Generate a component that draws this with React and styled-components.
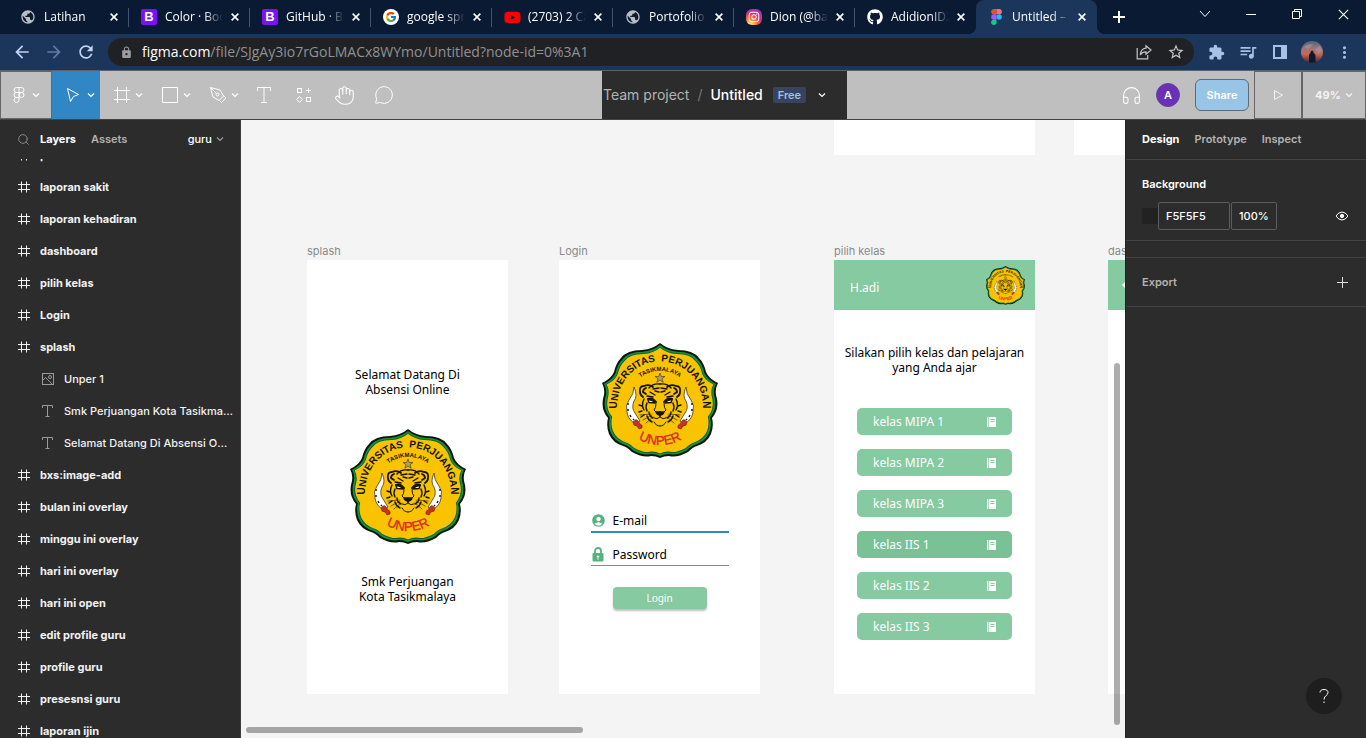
import React from 'react';
import styled, { createGlobalStyle, css } from 'styled-components';
import {
  MdPublic, MdArrowBack, MdArrowForward, MdRefresh, MdLock, MdStarBorder,
  MdExtension, MdQueueMusic, MdMoreVert, MdAccountCircle,
} from 'react-icons/md';
import { FcGoogle } from 'react-icons/fc';
import { FaYoutube, FaGithub, FaInstagram } from 'react-icons/fa';
import { Hand, MessageCircle, Headphones, Search } from 'lucide-react';

const color = {
  strip: '#0a1a33',
  bar: '#1c355b',
  pill: '#202124',
  grey: '#bfbfbf',
  line: '#666666',
  panel: '#2c2c2c',
  rule: '#444444',
  canvas: '#f4f4f4',
  green: '#85caa0',
};

const GlobalStyle = createGlobalStyle`
  * { box-sizing: border-box; }
  body { margin: 0; background: ${color.panel}; }
  button, input { font: inherit; color: inherit; margin: 0; padding: 0; border: 0; background: none; }
  svg { display: block; flex: none; }
`;

const Page = styled.div`
  height: 100vh;
  display: flex;
  flex-direction: column;
  overflow: hidden;
  font: 500 11px/16px Inter, sans-serif;
  color: #fff;
`;

/* Browser frame */

const TabStrip = styled.div`
  flex: none;
  height: 34px;
  display: flex;
  padding-left: 8px;
  background: ${color.strip};
  font: 12px/16px "Open Sans", sans-serif;
`;

const Tab = styled.div`
  position: relative;
  flex: 0 0 121px;
  height: 34px;
  display: flex;
  align-items: center;
  gap: 8px;
  padding-left: 12px;
  &::after {
    content: '';
    position: absolute;
    right: 0;
    top: 8px;
    width: 1px;
    height: 19px;
    background: ${(p) => (p.$plain ? 'transparent' : '#46556f')};
  }
  ${(p) => p.$active && css`
    background: ${color.bar};
    border-radius: 8px 8px 0 0;
    &::before, &::after {
      content: '';
      position: absolute;
      top: auto;
      bottom: 0;
      width: 8px;
      height: 8px;
    }
    &::before {
      left: -8px;
      background: radial-gradient(circle at 0 0, transparent 8px, ${color.bar} 8px);
    }
    &::after {
      right: -8px;
      background: radial-gradient(circle at 100% 0, transparent 8px, ${color.bar} 8px);
    }
  `}
`;

const TabIcon = styled.span`
  flex: none;
  width: 16px;
  height: 16px;
  display: flex;
  align-items: center;
  justify-content: center;
  color: ${(p) => p.$color || '#fff'};
`;

const TabTitle = styled.span`
  flex: 0 0 58px;
  overflow: hidden;
  white-space: nowrap;
  mask-image: linear-gradient(to right, #000 68%, transparent 100%);
`;

const IconButton = styled.button`
  flex: none;
  width: ${(p) => p.$w || 32}px;
  height: ${(p) => p.$h || 28}px;
  display: flex;
  align-items: center;
  justify-content: center;
  color: ${(p) => p.$color || '#fff'};
`;

const NewTab = styled(IconButton)`
  margin: 3px auto 0 6px;
`;

const BootstrapMark = styled.span`
  width: 16px;
  height: 16px;
  border-radius: 2px;
  background: #7a12f5;
  color: #fff;
  font: 700 13px/16px "Liberation Sans", sans-serif;
  text-align: center;
`;

const InstagramMark = styled.span`
  width: 16px;
  height: 16px;
  border-radius: 6px;
  display: flex;
  align-items: center;
  justify-content: center;
  background: radial-gradient(circle at 25% 100%, #ffd45a 10%, #fb6d34 35%, #d82d7e 60%, #8b34d6 100%);
`;

const AddressRow = styled.div`
  flex: none;
  height: 36px;
  display: flex;
  align-items: center;
  padding: 0 6px;
  background: ${color.bar};
`;

const Address = styled.div`
  flex: 1;
  min-width: 0;
  height: 28px;
  margin: 0 6px;
  padding: 0 2px 0 12px;
  display: flex;
  align-items: center;
  gap: 9px;
  border-radius: 14px;
  background: ${color.pill};
  color: #9a9da1;
`;

const Url = styled.span`
  flex: 1;
  overflow: hidden;
  white-space: nowrap;
  font: 14px/20px "Open Sans", sans-serif;
  color: #8f9295;
  b { font-weight: 400; color: #fff; }
`;

const AddressActions = styled.div`
  display: flex;
  color: #c4c7ca;
`;

/* Editor toolbar */

const Toolbar = styled.header`
  flex: none;
  height: 50px;
  display: flex;
  background: ${color.grey};
  border-top: 1px solid #59636f;
  border-bottom: 1px solid #444;
`;

const ToolGroup = styled.div`
  flex: 1;
  display: flex;
`;

const MenuTool = styled.button`
  width: ${(p) => (p.$outlined ? 52 : 48)}px;
  display: flex;
  align-items: center;
  justify-content: space-between;
  padding: 0 ${(p) => (p.$outlined ? 11 : 5)}px 0 ${(p) => (p.$outlined ? 12 : 13)}px;
  background: ${(p) => (p.$active ? '#3187c5' : 'transparent')};
  ${(p) => p.$outlined && css`border: 1px solid ${color.line};`}
`;

const Tool = styled.button`
  width: 40px;
  display: flex;
  align-items: center;
  justify-content: center;
`;

const FileTitle = styled.div`
  flex: 0 0 245px;
  display: flex;
  align-items: center;
  padding-left: 1px;
  background: ${color.panel};
  font-size: 14px;
  font-weight: 400;
  color: #b3b3b3;
  white-space: nowrap;
`;

const Slash = styled.span`
  margin: 0 8px;
  color: #777;
`;

const FileName = styled.span`
  font-weight: 500;
  color: #fff;
`;

const FreeBadge = styled.span`
  height: 16px;
  margin: 0 12px 0 10px;
  padding: 0 5px;
  border-radius: 2px;
  background: #394360;
  color: #96c4e8;
  font-size: 11px;
  font-weight: 600;
`;

const ShareGroup = styled.div`
  flex: 0 0 519px;
  display: flex;
  align-items: center;
  justify-content: flex-end;
`;

const Avatar = styled.span`
  width: 24px;
  height: 24px;
  margin: 0 15px 0 14px;
  border-radius: 50%;
  border: 1px solid #62479c;
  background: #6b2fb8;
  font-weight: 600;
  line-height: 22px;
  text-align: center;
`;

const Share = styled.button`
  width: 54px;
  height: 32px;
  margin-right: 5px;
  border: 1px solid #5f6b78;
  border-radius: 6px;
  background: #98c4e6;
  font-weight: 600;
`;

const EndButton = styled.button`
  width: ${(p) => p.$w}px;
  height: 48px;
  display: flex;
  align-items: center;
  justify-content: center;
  gap: 4px;
  border: 1px solid ${color.line};
  font-weight: 700;
  color: #f4f4f4;
`;

/* Panels */

const Workspace = styled.div`
  flex: 1;
  min-height: 0;
  display: flex;
`;

const LeftPanel = styled.aside`
  flex: 0 0 241px;
  min-width: 0;
  display: flex;
  flex-direction: column;
  border-right: 1px solid #3c3c3c;
  background: ${color.panel};
`;

const LeftHeader = styled.div`
  flex: none;
  height: 39px;
  display: flex;
  align-items: center;
  padding: 0 16px 1px 17px;
`;

const SearchIcon = styled(Search)`
  margin-right: 10px;
  color: #9a9a9a;
`;

const PanelTab = styled.button`
  margin-right: 15px;
  font-weight: ${(p) => (p.$on ? 700 : 600)};
  color: ${(p) => (p.$on ? '#fff' : '#b3b3b3')};
`;

const PagePicker = styled.button`
  margin-left: auto;
  display: flex;
  align-items: center;
  gap: 4px;
`;

const Layers = styled.ul`
  flex: 1;
  min-height: 0;
  overflow: hidden;
  margin: 0;
  padding: 0;
  list-style: none;
  & > li:first-child { margin-top: -20px; }
`;

const Layer = styled.li`
  height: 32px;
  display: flex;
  align-items: center;
  gap: 8px;
  padding: 0 7px 0 ${(p) => (p.$child ? 40 : 16)}px;
  font-weight: ${(p) => (p.$child ? 500 : 700)};
  color: #f2f2f2;
  span { overflow: hidden; text-overflow: ellipsis; white-space: nowrap; }
`;

const RightPanel = styled.aside`
  position: relative;
  flex: 0 0 241px;
  border-left: 1px solid #222;
  background: ${color.panel};
`;

const Section = styled.section`
  height: ${(p) => p.$h}px;
  padding: 0 16px;
  border-bottom: 1px solid ${color.rule};
`;

const SectionRow = styled.div`
  height: ${(p) => p.$h}px;
  display: flex;
  align-items: center;
  font-weight: 600;
  color: ${(p) => (p.$dim ? '#b3b3b3' : '#fff')};
`;

const RowAction = styled(IconButton)`
  margin-left: auto;
`;

const Swatch = styled.span`
  width: 16px;
  height: 16px;
  background: #222;
`;

const Field = styled.input`
  && {
    width: ${(p) => p.$w}px;
    height: 28px;
    margin-right: 1px;
    padding-left: 7px;
    border: 1px solid #5c5c5c;
    border-radius: 2px;
    font-weight: 500;
    color: #fff;
  }
`;

const Help = styled.button`
  position: absolute;
  right: 24px;
  bottom: 24px;
  width: 36px;
  height: 36px;
  border-radius: 50%;
  background: #1e1e1e;
  display: flex;
  align-items: center;
  justify-content: center;
`;

/* Canvas */

const Canvas = styled.main`
  position: relative;
  flex: 1;
  min-width: 0;
  overflow: hidden;
  background: ${color.canvas};
  color: #000;
`;

const Artboard = styled.section`
  position: absolute;
  left: ${(p) => p.$x}px;
  top: ${(p) => p.$y}px;
  width: 201px;
  height: 434px;
  display: flex;
  flex-direction: column;
  align-items: center;
  background: #fff;
  font: 12px/15px "Noto Sans", sans-serif;
`;

const ArtboardName = styled.span`
  position: absolute;
  left: 0;
  top: -17px;
  font: 400 11px/16px Inter, sans-serif;
  color: #8a8a8a;
`;

const Message = styled.p`
  margin: ${(p) => p.$top}px 0 0;
  text-align: center;
  white-space: pre;
`;

const LogoSlot = styled.div`
  margin-top: ${(p) => p.$top}px;
`;

const LoginForm = styled.form`
  margin-top: 51px;
  display: flex;
  flex-direction: column;
  align-items: center;
`;

const LoginField = styled.label`
  width: 138px;
  height: 23px;
  margin-bottom: 10px;
  display: flex;
  align-items: center;
  gap: 7px;
  border-bottom: ${(p) => (p.$focus ? '2px solid #3187c5' : '1px solid #8a8a8a')};
  input { width: 100px; outline: 0; }
  input::placeholder { color: #000; opacity: 1; }
`;

const LoginButton = styled.button`
  && {
    width: 94px;
    height: 22px;
    margin-top: 11px;
    border-radius: 4px;
    background: ${color.green};
    box-shadow: 0 2px 2px rgba(0, 0, 0, 0.25);
    color: #fff;
    font-size: 10px;
  }
`;

const PhoneHeader = styled.div`
  align-self: stretch;
  height: 50px;
  display: flex;
  align-items: center;
  justify-content: space-between;
  padding: 0 ${(p) => (p.$tight ? 14 : 10)}px 0 ${(p) => (p.$tight ? 14 : 16)}px;
  background: ${color.green};
  color: #fff;
`;

const Greeting = styled.span`
  padding-top: 4px;
`;

const ClassList = styled.div`
  margin-top: 33px;
  display: flex;
  flex-direction: column;
  gap: 14px;
`;

const ClassButton = styled.button`
  && {
    width: 155px;
    height: 27px;
    display: flex;
    align-items: center;
    justify-content: space-between;
    padding: 0 15px 0 16px;
    border-radius: 5px;
    background: ${(p) => (p.$hover ? '#78c296' : color.green)};
    color: #fff;
  }
`;

const ScrollThumb = styled.div`
  position: absolute;
  border-radius: 3px;
  background: rgba(0, 0, 0, 0.32);
  ${(p) => (p.$vertical
    ? css`right: 5px; top: 243px; bottom: 13px; width: 6px;`
    : css`left: 5px; bottom: 5px; width: 337px; height: 6px;`)}
`;

/* Icons */

const Line = ({ w = 16, h = w, box, sw = 1, children, stroke = 'currentColor' }) => (
  <svg width={w} height={h} viewBox={box || `0 0 ${w} ${h}`} fill="none" stroke={stroke} strokeWidth={sw}>
    {children}
  </svg>
);

const Caret = ({ stroke }) => (
  <Line w={8} h={6} stroke={stroke} sw={1.2}><path d="M1 1.5 4 4.5 7 1.5" /></Line>
);
const Cross = ({ size = 8, sw = 2 }) => (
  <Line w={size} sw={sw} box="0 0 10 10"><path d="M.8.8 9.2 9.2M9.2.8.8 9.2" /></Line>
);
const FrameIcon = () => <Line w={18}><path d="M4.5 1v16M13.5 1v16M1 4.5h16M1 13.5h16" /></Line>;
const HashIcon = () => <Line w={16}><path d="M5.5 2.5v11M10.5 2.5v11M2 5.5h12M2 10.5h12" /></Line>;
const TextIcon = () => (
  <Line w={18}><path d="M2.5 5V1.5h13V5M9 1.5v15M6 16.5h6" /></Line>
);
const LayerTextIcon = () => (
  <Line w={16} stroke="#9a9a9a"><path d="M2.5 5V2.5h10V5M7.500 2.500v11M5.500 13.500h4" /></Line>
);
const ImageIcon = () => (
  <Line w={16} stroke="#9a9a9a">
    <rect x="2.5" y="2.5" width="11" height="11" /><circle cx="10" cy="6" r="1.5" />
    <path d="m3 9 2.5-2.5L12 13" />
  </Line>
);
const PenIcon = () => (
  <Line w={18}>
    <path d="M1.5 1.5 11 4l3.5 6-4.500 4.500L4 11Zm0 0 6 6M10.500 14.500l2 2 4.500-4.500-2.500-2" />
    <circle cx="8.500" cy="8.500" r="1.500" />
  </Line>
);
const FigmaOutline = () => (
  <Line w={12} h={18}>
    <path d="M6 1.500H3.500a2.500 2.500 0 0 0 0 5H6Zm0 0h2.500a2.500 2.500 0 0 1 0 5H6M6 6.500H3.500a2.500 2.500 0 0 0 0 5H6ZM6 11.500H3.500A2.500 2.500 0 1 0 6 14Z" />
    <circle cx="8.500" cy="9" r="2.500" />
  </Line>
);
const FigmaColor = () => (
  <svg width="11" height="16" viewBox="0 0 10 15">
    <path fill="#f24e1e" d="M5 0H2.500a2.500 2.500 0 0 0 0 5H5Z" />
    <path fill="#ff7262" d="M5 0h2.500a2.500 2.500 0 0 1 0 5H5Z" />
    <path fill="#a259ff" d="M5 5H2.500a2.500 2.500 0 0 0 0 5H5Z" />
    <circle cx="7.500" cy="7.500" r="2.500" fill="#1abcfe" />
    <path fill="#0acf83" d="M5 10H2.500A2.500 2.500 0 1 0 5 12.500Z" />
  </svg>
);
const ResourcesIcon = () => (
  <Line w={16}>
    <rect x="1.500" y="1.500" width="4" height="4" /><rect x="10.500" y="10.500" width="4" height="4" />
    <path d="M12.500 1v5M10 3.500h5M3.500 9.500 6.300 12.500 3.500 15.300.700 12.500Z" />
  </Line>
);
const EyeIcon = () => (
  <Line w={14} h={10}>
    <path d="M1 5Q3.500 1 7 1t6 4Q10.500 9 7 9T1 5Z" /><circle cx="7" cy="5" r="1.700" fill="currentColor" />
  </Line>
);
const NotebookIcon = () => (
  <svg width="10" height="10" viewBox="0 0 10 10">
    <path d="M0 0h1.300v10H0zM2 0h7v10H2z" fill="#fff" />
    <path d="M3.500 2.500h4M3.500 4.500h4" stroke={color.green} />
  </svg>
);
const PadlockIcon = () => (
  <svg width="15" height="15" viewBox="-1 0 15 15">
    <path d="M3 7V4a3 3 0 0 1 6 0v3" fill="none" stroke="#55b27e" strokeWidth="1.800" />
    <rect x=".500" y="6" width="11" height="8.500" rx="1" fill="#55b27e" />
    <path d="M6 8.500v4M4.700 9.500h2.600" stroke="#fff" />
  </svg>
);
const SharePageIcon = () => (
  <Line w={16} sw={1.200}>
    <path d="M1.200 4v10.800h10.500V11" />
    <path d="M10 1.800 15 6l-5 4.200V7.800C7.500 7.700 5.600 8.600 4.300 11 4.500 7.500 6.500 4.600 10 4.200Z" />
  </Line>
);
const BackIcon = () => (
  <svg width="12" height="12" viewBox="0 0 12 12"><path d="M0 6 6 0v12z" fill="#fff" /></svg>
);
const ProfilePhoto = () => (
  <svg width="22" height="22" viewBox="0 0 22 22">
    <defs>
      <linearGradient id="sunset" x1="0" y1="0" x2="0" y2="1">
        <stop offset="0" stopColor="#4b6680" /><stop offset=".35" stopColor="#a1737a" />
        <stop offset=".6" stopColor="#c9684f" /><stop offset="1" stopColor="#38263a" />
      </linearGradient>
    </defs>
    <circle cx="11" cy="11" r="11" fill="url(#sunset)" />
    <path d="M3 6q5-4 9-2l-5 4zM14 8l5-3 2 5-4 3z" fill="#a99aa8" opacity=".6" />
    <path d="M8 21.500v-7q0-2 1.500-2.500 0-2.500 1.600-2.500T12.500 12q2 .5 2 3v6.500z" fill="#10182c" />
  </svg>
);

/* Scalloped outline of the university crest: right half as [control, point] pairs */
const half = [
  [65, 6, 76, 7], [91, 7, 97, 15], [102, 20, 104, 29], [107, 36, 116, 40],
  [112, 47, 115, 56], [117, 67, 110, 75], [112, 83, 109, 91], [105, 100, 95, 103],
  [91, 104, 86, 109], [75, 115, 67, 113], [62, 113, 58, 115],
];
const outline = (() => {
  let d = 'M58 0';
  half.forEach(([a, b, x, y]) => { d += `Q${a} ${b} ${x} ${y}`; });
  for (let i = half.length - 1; i >= 0; i -= 1) {
    const [a, b] = half[i];
    const [x, y] = i > 0 ? half[i - 1].slice(2) : [58, 0];
    d += `Q${116 - a} ${b} ${116 - x} ${y}`;
  }
  return `${d}Z`;
})();

const TigerHalf = () => (
  <g fill="none" stroke="#15130a" strokeWidth="1.400" strokeLinecap="round">
    <path d="M51 44q-4-3-9-1-5 0-4 6 0 3 3 5M44 45q-3 1-3 4l3 2" strokeWidth="1.800" />
    <path d="M58 41q-7-1-11 4M57 45l-6 1M57 49l-4-1M48 49l5 3M45 53l6 1M42 56q-3 6 0 11M45 60q-2 4 0 8M40 63l-3-1M40 68l-3 1M42 72l-3 2M45 73q1 4 5 6M47 69q0 4 4 6" />
    <path d="M46 57q4-1 7 3l-6-.500z" fill="#fff" />
    <path d="M46 56q4-2 8 3" strokeWidth="2" />
    <path d="M54 61q0 4-2 6l3 3h3M58 70v4q-3 3-6 1M52 79q2 4 6 4" strokeWidth="1" />
    <path d="M54 69h4v3q-3 0-4-3z" fill="#15130a" />
    <path d="M50 72l-9 5M51 74l-7 6M49 71l-11 1" strokeWidth=".600" />
  </g>
);

const DaggerHalf = () => (
  <g>
    <path d="M32 44q4 9 0 14-3 7 1 12l5 8-4 3q-8-4-9-12-2-7 2-12 5-6 5-13z" fill="#fff" stroke="#2b2410" strokeWidth=".700" />
    <path d="M26 60v2M26 66v2M28 72l1 2M31 76l1 1" stroke="#111" strokeWidth="1.400" />
    <path d="M31 79q3-4 5-1l2 3q3 1 2 4l-3 1-2-3q-4 0-4-4z" fill="#c8321e" stroke="#7c1c10" strokeWidth=".600" />
  </g>
);

const Crest = ({ size, id }) => (
  <svg width={size} height={size} viewBox="0 0 116 116" role="img" aria-label="Universitas Perjuangan Tasikmalaya">
    <defs>
      <path id={`${id}-name`} d="M15.500 66v-5a42.500 42.500 0 0 1 85 0v5" />
      <path id={`${id}-city`} d="M25 61a33 33 0 0 1 66 0" />
      <path id={`${id}-short`} d="M15 59a43 43 0 0 0 86 0" />
    </defs>
    <path d={outline} fill="#0b160c" />
    <path d={outline} fill="#149044" transform="translate(58 58) scale(.965) translate(-58 -58)" />
    <path d={outline} fill="#0b5d2c" transform="translate(58 58) scale(.935) translate(-58 -58)" />
    <path d={outline} fill="#f9c300" transform="translate(58 58) scale(.92) translate(-58 -58)" />
    <g fontFamily="Liberation Sans, sans-serif" fontWeight="700" textAnchor="middle" fill="#15130a">
      <text fontSize="10"><textPath href={`#${id}-name`} startOffset="50%">{'UNIVERSITAS\u00a0 PERJUANGAN'}</textPath></text>
      <text fontSize="6"><textPath href={`#${id}-city`} startOffset="50%">TASIKMALAYA</textPath></text>
      <text fontSize="13" fontWeight="400" fill="#d8281c" stroke="#d8281c" strokeWidth=".3"><textPath href={`#${id}-short`} startOffset="50%">UNPER</textPath></text>
    </g>
    <path d="m58 30 1.300 3.500h3.700l-3 2.200 1.200 3.600-3.200-2.200-3.200 2.200 1.200-3.600-3-2.200h3.700z" fill="#b5a05c" stroke="#4d431c" strokeWidth=".700" />
    <TigerHalf />
    <g transform="translate(116 0) scale(-1 1)"><TigerHalf /></g>
    <DaggerHalf />
    <g transform="translate(116 0) scale(-1 1)"><DaggerHalf /></g>
  </svg>
);

/* Data */

const globe = <MdPublic size={16} />;
const bootstrap = <BootstrapMark>B</BootstrapMark>;
const googleMark = (
  <svg width="16" height="16" viewBox="0 0 16 16">
    <circle cx="8" cy="8" r="8" fill="#fff" />
    <FcGoogle x="2" y="2" size={12} />
  </svg>
);

const tabs = [
  { title: 'Latihan', icon: globe, tint: '#b9bdc4' },
  { title: 'Color · Boo', icon: bootstrap },
  { title: 'GitHub · Bo', icon: bootstrap },
  { title: 'google spr', icon: googleMark },
  { title: '(2703) 2 Ca', icon: <FaYoutube size={17} />, tint: '#f00' },
  { title: 'Portofolio |', icon: globe, tint: '#b9bdc4' },
  { title: 'Dion (@ba', icon: <InstagramMark><FaInstagram size={12} /></InstagramMark> },
  { title: 'AdidionID2', icon: <FaGithub size={16} /> },
  { title: 'Untitled –', icon: <FigmaColor />, active: true },
];

const layers = [
  'presensi', 'laporan sakit', 'laporan kehadiran', 'dashboard', 'pilih kelas', 'Login', 'splash',
  { name: 'Unper 1', icon: <ImageIcon /> },
  { name: 'Smk Perjuangan Kota Tasikmalaya', icon: <LayerTextIcon /> },
  { name: 'Selamat Datang Di Absensi Online', icon: <LayerTextIcon /> },
  'bxs:image-add', 'bulan ini overlay', 'minggu ini overlay', 'hari ini overlay', 'hari ini open',
  'edit profile guru', 'profile guru', 'presesnsi guru', 'laporan ijin',
];

const classes = ['kelas MIPA 1', 'kelas MIPA 2', 'kelas MIPA 3', 'kelas IIS 1', 'kelas IIS 2', 'kelas IIS 3'];

export default function App() {
  return (
    <Page>
      <GlobalStyle />
      <TabStrip>
        {tabs.map((t, i) => (
          <Tab key={t.title} $active={t.active} $plain={i === 7}>
            <TabIcon $color={t.tint}>{t.icon}</TabIcon>
            <TabTitle>{t.title}</TabTitle>
            <IconButton $w={8} $h={16} aria-label={`Close ${t.title}`}><Cross /></IconButton>
          </Tab>
        ))}
        <NewTab aria-label="New tab"><Line w={12} sw={2}><path d="M6 0v12M0 6h12" /></Line></NewTab>
        <IconButton $w={46} aria-label="Search tabs"><Line w={12} h={8}><path d="m1 1 5 5.500L11 1" /></Line></IconButton>
        <IconButton $w={46} aria-label="Minimize"><Line w={10}><path d="M0 5.500h10" /></Line></IconButton>
        <IconButton $w={46} aria-label="Restore"><Line w={10}><path d="M.500 2.500h7v7h-7zM2.500 2.500v-2h7v7h-2" /></Line></IconButton>
        <IconButton $w={46} aria-label="Close window"><Cross size={11} sw={1} /></IconButton>
      </TabStrip>

      <AddressRow>
        <IconButton aria-label="Back" $color="#c3d4f2"><MdArrowBack size={20} /></IconButton>
        <IconButton aria-label="Forward" $color="#5f7ba6"><MdArrowForward size={20} /></IconButton>
        <IconButton aria-label="Reload" $color="#c3d4f2"><MdRefresh size={20} /></IconButton>
        <Address>
          <MdLock size={13} />
          <Url><b>figma.com</b>/file/SJgAy3io7rGoLMACx8WYmo/Untitled?node-id=0%3A1</Url>
          <AddressActions>
            <IconButton aria-label="Share page" $color="#c4c7ca"><SharePageIcon /></IconButton>
            <IconButton aria-label="Bookmark" $color="#c4c7ca"><MdStarBorder size={18} /></IconButton>
          </AddressActions>
        </Address>
        <IconButton aria-label="Extensions" $color="#a8c0e6"><MdExtension size={17} /></IconButton>
        <IconButton aria-label="Media" $color="#a8c0e6"><MdQueueMusic size={20} /></IconButton>
        <IconButton aria-label="Side panel" $color="#a8c0e6">
          <Line w={14} sw={2}><path d="M1 1h12v12H1z" /><path d="M9 1h4v12H9z" fill="currentColor" /></Line>
        </IconButton>
        <IconButton aria-label="Profile"><ProfilePhoto /></IconButton>
        <IconButton aria-label="Menu" $color="#a8c0e6"><MdMoreVert size={19} /></IconButton>
      </AddressRow>

      <Toolbar>
        <ToolGroup>
          <MenuTool $outlined aria-label="Main menu"><FigmaOutline /><Caret /></MenuTool>
          <MenuTool $active aria-label="Move">
            <Line w={16}><path d="m2.500 1.500 11 6L8.500 9.500l-3 5z" /></Line><Caret />
          </MenuTool>
          <MenuTool aria-label="Frame"><FrameIcon /><Caret /></MenuTool>
          <MenuTool aria-label="Rectangle"><Line w={18}><path d="M1.500 1.500h15v15h-15z" /></Line><Caret /></MenuTool>
          <MenuTool aria-label="Pen"><PenIcon /><Caret /></MenuTool>
          <Tool aria-label="Text"><TextIcon /></Tool>
          <Tool aria-label="Resources"><ResourcesIcon /></Tool>
          <Tool aria-label="Hand"><Hand size={21} strokeWidth={1.2} /></Tool>
          <Tool aria-label="Comment"><MessageCircle size={20} strokeWidth={1.2} /></Tool>
        </ToolGroup>
        <FileTitle>
          <span>Team project</span><Slash>/</Slash><FileName>Untitled</FileName>
          <FreeBadge>Free</FreeBadge><Caret stroke="#fff" />
        </FileTitle>
        <ShareGroup>
          <Headphones size={21} strokeWidth={1.2} />
          <Avatar>A</Avatar>
          <Share>Share</Share>
          <EndButton $w={48} aria-label="Present"><Line w={12}><path d="m2.500 1.500 8 4.500-8 4.500z" /></Line></EndButton>
          <EndButton $w={64}>49% <Caret /></EndButton>
        </ShareGroup>
      </Toolbar>

      <Workspace>
        <LeftPanel>
          <LeftHeader>
            <SearchIcon size={13} strokeWidth={1.5} />
            <PanelTab $on>Layers</PanelTab>
            <PanelTab>Assets</PanelTab>
            <PagePicker>guru <Caret stroke="#9a9a9a" /></PagePicker>
          </LeftHeader>
          <Layers>
            {layers.map((l) => (
              <Layer key={l.name || l} $child={Boolean(l.icon)}>
                {l.icon || <HashIcon />}<span>{l.name || l}</span>
              </Layer>
            ))}
          </Layers>
        </LeftPanel>

        <Canvas>
          <Artboard $x={593} $y={-399} />
          <Artboard $x={833} $y={-399} />

          <Artboard $x={66} $y={140}>
            <ArtboardName>splash</ArtboardName>
            <Message $top={107}>{'Selamat Datang Di\nAbsensi Online'}</Message>
            <LogoSlot $top={32}><Crest size={116} id="splash" /></LogoSlot>
            <Message $top={29}>{'Smk Perjuangan\nKota Tasikmalaya'}</Message>
          </Artboard>

          <Artboard $x={318} $y={140}>
            <ArtboardName>Login</ArtboardName>
            <LogoSlot $top={83}><Crest size={116} id="login" /></LogoSlot>
            <LoginForm>
              <LoginField $focus>
                <MdAccountCircle size={15} color="#55b27e" />
                <input type="email" aria-label="E-mail" placeholder="E-mail" />
              </LoginField>
              <LoginField>
                <PadlockIcon />
                <input type="password" aria-label="Password" placeholder="Password" />
              </LoginField>
              <LoginButton type="button">Login</LoginButton>
            </LoginForm>
          </Artboard>

          <Artboard $x={593} $y={140}>
            <ArtboardName>pilih kelas</ArtboardName>
            <PhoneHeader><Greeting>H.adi</Greeting><Crest size={39} id="header" /></PhoneHeader>
            <Message $top={35}>{'Silakan pilih kelas dan pelajaran\nyang Anda ajar'}</Message>
            <ClassList>
              {classes.map((c) => (
                <ClassButton key={c} $hover={c === 'kelas IIS 1'}>{c}<NotebookIcon /></ClassButton>
              ))}
            </ClassList>
          </Artboard>

          <Artboard $x={867} $y={140}>
            <ArtboardName>dashboard</ArtboardName>
            <PhoneHeader $tight><BackIcon /></PhoneHeader>
          </Artboard>

          <ScrollThumb />
          <ScrollThumb $vertical />
        </Canvas>

        <RightPanel>
          <Section $h={40}>
            <SectionRow $h={38}>
              <PanelTab $on>Design</PanelTab>
              <PanelTab>Prototype</PanelTab>
              <PanelTab>Inspect</PanelTab>
            </SectionRow>
          </Section>
          <Section $h={81}>
            <SectionRow $h={48}>Background</SectionRow>
            <SectionRow $h={16}>
              <Swatch />
              <Field $w={72} aria-label="Background colour" defaultValue="F5F5F5" />
              <Field $w={46} aria-label="Opacity" defaultValue="100%" />
              <RowAction $w={16} $h={16} aria-label="Toggle visibility"><EyeIcon /></RowAction>
            </SectionRow>
          </Section>
          <Section $h={17} />
          <Section $h={49}>
            <SectionRow $h={48} $dim>
              <span>Export</span>
              <RowAction $w={16} $h={16} $color="#e0e0e0" aria-label="Add export"><Line w={11}><path d="M5.500 0v11M0 5.500h11" /></Line></RowAction>
            </SectionRow>
          </Section>
          <Help aria-label="Help">
            <Line w={12} h={16}><path d="M2 4.500C2 2.500 3.500 1.500 6 1.500s4 1 4 3c0 3-4 3-4 7M6 13.500v1.500" /></Line>
          </Help>
        </RightPanel>
      </Workspace>
    </Page>
  );
}
